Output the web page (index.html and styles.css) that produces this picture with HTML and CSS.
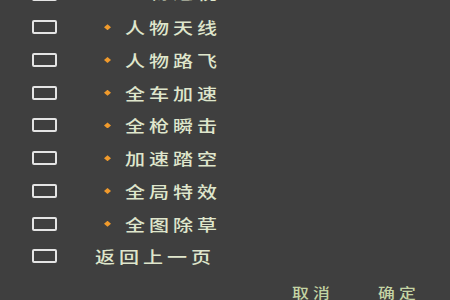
FILE: index.html
```html
<!DOCTYPE html>
<html lang="zh">
<head>
<meta charset="utf-8">
<link rel="stylesheet" href="styles.css">
</head>
<body>
<div class="screen">
  <div class="list">
    <div class="row top"><span class="box"></span><span class="label"><span class="dot"></span><span class="txt">人物透视</span></span></div>
    <div class="row"><span class="box"></span><span class="label"><span class="dot"></span><span class="txt">人物天线</span></span></div>
    <div class="row"><span class="box"></span><span class="label"><span class="dot"></span><span class="txt">人物路飞</span></span></div>
    <div class="row"><span class="box"></span><span class="label"><span class="dot"></span><span class="txt">全车加速</span></span></div>
    <div class="row"><span class="box"></span><span class="label"><span class="dot"></span><span class="txt">全枪瞬击</span></span></div>
    <div class="row"><span class="box"></span><span class="label"><span class="dot"></span><span class="txt">加速踏空</span></span></div>
    <div class="row"><span class="box"></span><span class="label"><span class="dot"></span><span class="txt">全局特效</span></span></div>
    <div class="row"><span class="box"></span><span class="label"><span class="dot"></span><span class="txt">全图除草</span></span></div>
    <div class="row"><span class="box"></span><span class="label plain"><span class="txt">返回上一页</span></span></div>
  </div>
  <div class="footer">
    <span class="btn">取消</span>
    <span class="btn">确定</span>
  </div>
</div>
</body>
</html>
```
FILE: styles.css
```css
html, body {
  margin: 0;
  padding: 0;
  background: #3f3f3f;
}
.screen {
  width: 450px;
  height: 300px;
  overflow: hidden;
  background: #3f3f3f;
  font-family: "Noto Sans CJK SC", "Noto Sans", sans-serif;
  color: #dfe6cc;
}
.list {
  display: flex;
  flex-direction: column;
  margin-top: -22px;
}
.row {
  display: flex;
  align-items: center;
  height: 32.75px;
}
.row.top .label {
  margin-bottom: 5px;
}
.box {
  box-sizing: border-box;
  width: 25px;
  height: 14px;
  margin-left: 32px;
  border: 2px solid #e4e4e4;
  border-radius: 2px;
  flex: none;
}
.label {
  display: flex;
  align-items: center;
  margin-left: 47px;
}
.label.plain {
  margin-left: 38px;
}
.dot {
  width: 7px;
  height: 6px;
  background: #f09a2c;
  clip-path: polygon(50% 0, 100% 50%, 50% 100%, 0 50%);
  margin-right: 14px;
  flex: none;
}
.txt {
  display: inline-block;
  font-size: 16px;
  font-weight: 500;
  line-height: 18px;
  letter-spacing: 3.2px;
  transform: scaleX(1.25);
  transform-origin: left center;
  white-space: nowrap;
}
.footer {
  display: flex;
  padding-top: 11px;
  padding-left: 292px;
}
.btn {
  display: inline-block;
  font-size: 14px;
  font-weight: 500;
  line-height: 16px;
  letter-spacing: 3.5px;
  transform: scaleX(1.2);
  transform-origin: left center;
  color: #c4d4a4;
  white-space: nowrap;
}
.btn + .btn {
  margin-left: 51px;
}
```
